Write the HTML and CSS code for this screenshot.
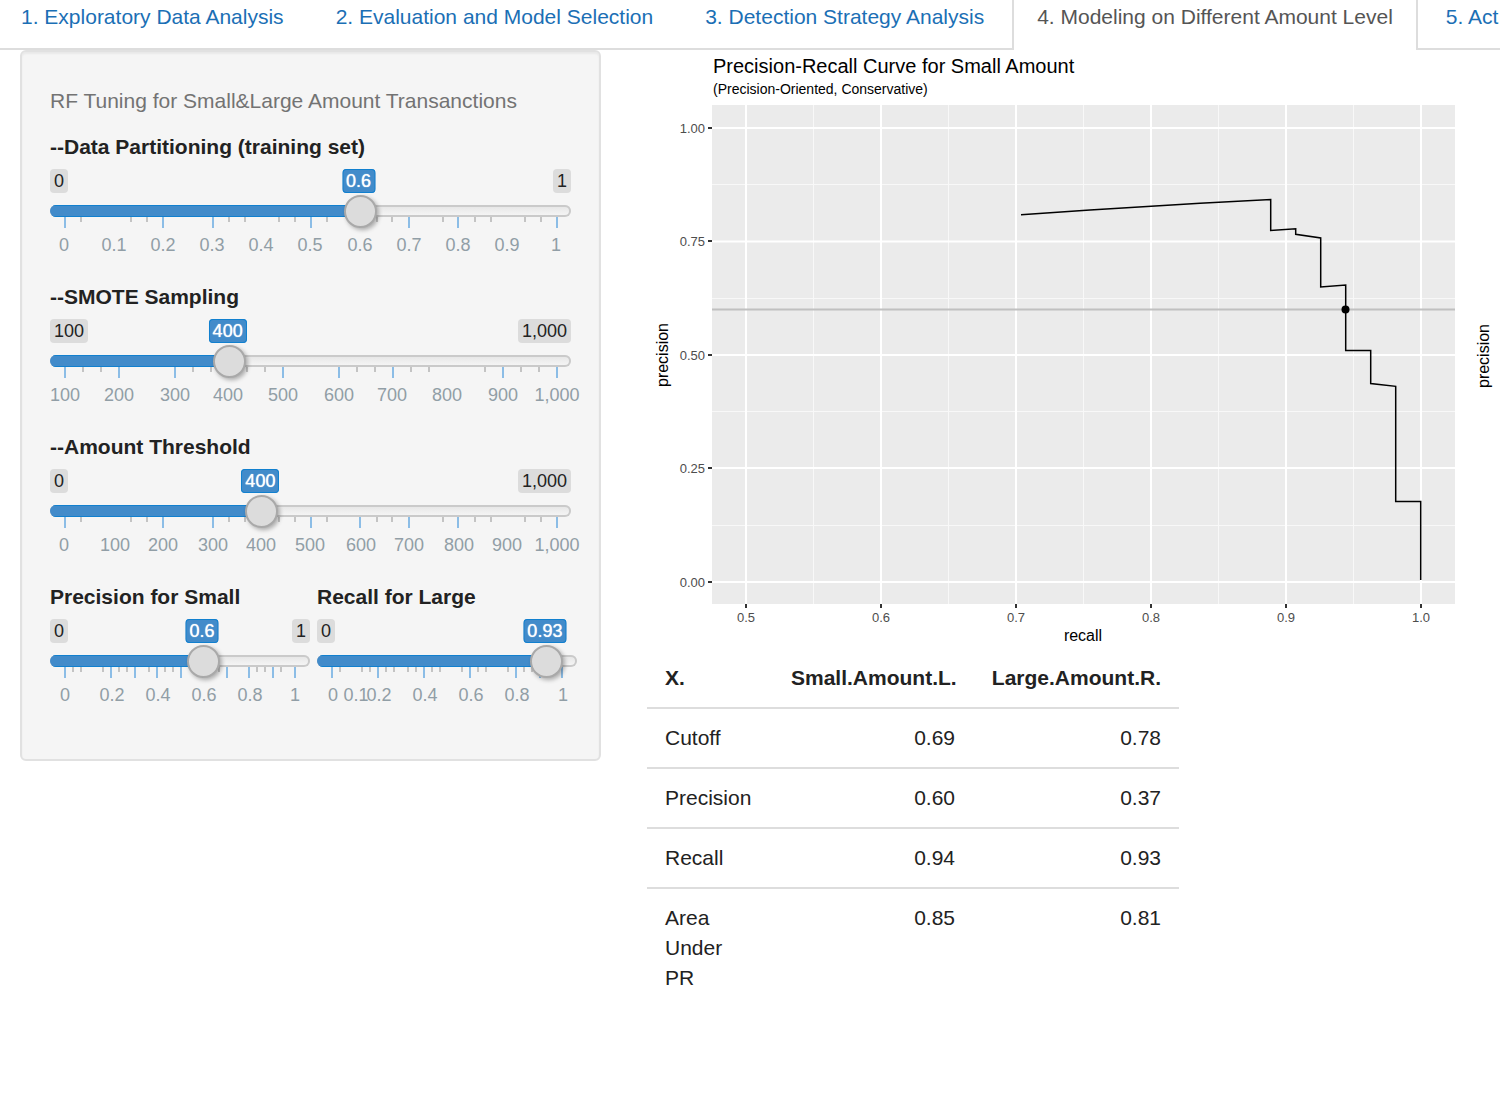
FILE: index.html
```html
<!DOCTYPE html>
<html lang="en">
<head>
<meta charset="utf-8">
<title>Modeling on Different Amount Level</title>
<link rel="stylesheet" href="styles.css">
</head>
<body>
<nav class="tabs">
  <a class="tab" href="#explore">1. Exploratory Data Analysis</a>
  <a class="tab" href="#evaluation">2. Evaluation and Model Selection</a>
  <a class="tab" href="#strategy">3. Detection Strategy Analysis</a>
  <a class="tab tab-active" href="#modeling" aria-current="page">4. Modeling on Different Amount Level</a>
  <a class="tab" href="#act">5. Act</a>
</nav>
<div class="layout">
  <form class="sidebar">
    <p class="help">RF Tuning for Small&amp;Large Amount Transanctions</p>

    <div class="slider" style="--p:0.6">
      <label for="partition">--Data Partitioning (training set)</label>
      <div class="chips"><span class="chip">0</span><span class="chip">1</span><output class="bubble" for="partition">0.6</output></div>
      <div class="control"><span class="track"><span class="fill"></span></span><input id="partition" type="range" min="0" max="1" step="0.1" value="0.6"></div>
      <svg class="scale" viewBox="0 0 521 40">
        <path class="big" d="M15 0v11M113 0v11M163 0v11M261 0v11M310 0v11M359 0v11M408 0v11M507 0v11"/>
        <path class="small" d="M31 0v5M81 0v5M97 0v5M179 0v5M195 0v5M229 0v5M245 0v5M277 0v5M327 0v5M342 0v5M393 0v5M425 0v5M441 0v5M475 0v5M491 0v5"/>
        <text x="14" y="34">0</text><text x="64" y="34">0.1</text><text x="113" y="34">0.2</text><text x="162" y="34">0.3</text><text x="211" y="34">0.4</text><text x="260" y="34">0.5</text><text x="310" y="34">0.6</text><text x="359" y="34">0.7</text><text x="408" y="34">0.8</text><text x="457" y="34">0.9</text><text x="506" y="34">1</text>
      </svg>
    </div>

    <div class="slider" style="--p:0.3333">
      <label for="smote">--SMOTE Sampling</label>
      <div class="chips"><span class="chip">100</span><span class="chip">1,000</span><output class="bubble" for="smote">400</output></div>
      <div class="control"><span class="track"><span class="fill"></span></span><input id="smote" type="range" min="100" max="1000" step="100" value="400"></div>
      <svg class="scale" viewBox="0 0 521 40">
        <path class="big" d="M15 0v11M69 0v11M125 0v11M179 0v11M233 0v11M289 0v11M343 0v11M453 0v11M507 0v11"/>
        <path class="small" d="M33 0v5M51 0v5M143 0v5M161 0v5M197 0v5M215 0v5M307 0v5M325 0v5M361 0v5M379 0v5M435 0v5M471 0v5M489 0v5"/>
        <text x="15" y="34">100</text><text x="69" y="34">200</text><text x="125" y="34">300</text><text x="178" y="34">400</text><text x="233" y="34">500</text><text x="289" y="34">600</text><text x="342" y="34">700</text><text x="397" y="34">800</text><text x="453" y="34">900</text><text x="507" y="34">1,000</text>
      </svg>
    </div>

    <div class="slider" style="--p:0.4">
      <label for="threshold">--Amount Threshold</label>
      <div class="chips"><span class="chip">0</span><span class="chip">1,000</span><output class="bubble" for="threshold">400</output></div>
      <div class="control"><span class="track"><span class="fill"></span></span><input id="threshold" type="range" min="0" max="1000" step="100" value="400"></div>
      <svg class="scale" viewBox="0 0 521 40">
        <path class="big" d="M15 0v11M113 0v11M163 0v11M261 0v11M310 0v11M359 0v11M408 0v11M507 0v11"/>
        <path class="small" d="M31 0v5M81 0v5M97 0v5M179 0v5M195 0v5M229 0v5M245 0v5M277 0v5M327 0v5M342 0v5M393 0v5M425 0v5M441 0v5M475 0v5M491 0v5"/>
        <text x="14" y="34">0</text><text x="65" y="34">100</text><text x="113" y="34">200</text><text x="163" y="34">300</text><text x="211" y="34">400</text><text x="260" y="34">500</text><text x="311" y="34">600</text><text x="359" y="34">700</text><text x="409" y="34">800</text><text x="457" y="34">900</text><text x="507" y="34">1,000</text>
      </svg>
    </div>

    <div class="pair">
      <div class="slider" style="--p:0.6">
        <label for="precision">Precision for Small</label>
        <div class="chips"><span class="chip">0</span><span class="chip">1</span><output class="bubble" for="precision">0.6</output></div>
        <div class="control"><span class="track"><span class="fill"></span></span><input id="precision" type="range" min="0" max="1" step="0.01" value="0.6"></div>
        <svg class="scale" viewBox="0 0 260 40">
          <path class="big" d="M15 0v11M61 0v11M85 0v11M107 0v11M131 0v11M153 0v11M177 0v11M199 0v11M223 0v11M245 0v11"/>
          <path class="small" d="M23 0v5M31 0v5M53 0v5M69 0v5M77 0v5M99 0v5M115 0v5M123 0v5M169 0v5M207 0v5M215 0v5M231 0v5"/>
          <text x="15" y="34">0</text><text x="62" y="34">0.2</text><text x="108" y="34">0.4</text><text x="154" y="34">0.6</text><text x="200" y="34">0.8</text><text x="245" y="34">1</text>
        </svg>
      </div>
      <div class="slider" style="--p:0.93">
        <label for="recall">Recall for Large</label>
        <div class="chips"><span class="chip">0</span><output class="bubble" for="recall">0.93</output></div>
        <div class="control"><span class="track"><span class="fill"></span></span><input id="recall" type="range" min="0" max="1" step="0.01" value="0.93"></div>
        <svg class="scale" viewBox="0 0 260 40">
          <path class="big" d="M15 0v11M61 0v11M107 0v11M153 0v11M199 0v11M223 0v11M245 0v11"/>
          <path class="small" d="M23 0v5M45 0v5M53 0v5M69 0v5M77 0v5M91 0v5M99 0v5M115 0v5M123 0v5M145 0v5M161 0v5M169 0v5M191 0v5M207 0v5M215 0v5"/>
          <text x="16" y="34">0</text><text x="39" y="34">0.1</text><text x="62" y="34">0.2</text><text x="108" y="34">0.4</text><text x="154" y="34">0.6</text><text x="200" y="34">0.8</text><text x="246" y="34">1</text>
        </svg>
      </div>
    </div>
  </form>

  <main class="results">
    <div class="plots">
      <svg class="plot" viewBox="647 50 815 599" role="img" aria-label="Precision-recall curve for small amounts">
        <text class="title" x="713" y="73">Precision-Recall Curve for Small Amount</text>
        <text class="subtitle" x="713" y="94">(Precision-Oriented, Conservative)</text>
        <rect class="panel" x="712" y="105" width="743" height="499"/>
        <path class="minor" d="M813.5 105v499M948.5 105v499M1083.5 105v499M1218.5 105v499M1353.5 105v499M712 184.5h743M712 298.5h743M712 411.5h743M712 525.5h743"/>
        <path class="major" d="M746 105v499M881 105v499M1016 105v499M1151 105v499M1286 105v499M1421 105v499M712 128h743M712 241.5h743M712 355h743M712 468h743M712 582h743"/>
        <path class="axis" d="M708 128h4M708 241h4M708 355h4M708 468h4M708 582h4M746 604v4M881 604v4M1016 604v4M1151 604v4M1286 604v4M1421 604v4"/>
        <path class="curve" d="M1021 214.7L1090 210L1200 203.3L1270.7 199.5V230.5L1295.7 228.7V234.3L1320.7 238V287L1345.7 285V350.5H1370.7V383.5L1395.7 386.3V501.5H1420.7V580"/>
        <path class="cutoff" d="M712 309.5h743"/>
        <circle cx="1345.5" cy="309.5" r="4"/>
        <g class="ylabels"><text x="705" y="133">1.00</text><text x="705" y="246">0.75</text><text x="705" y="360">0.50</text><text x="705" y="473">0.25</text><text x="705" y="587">0.00</text></g>
        <g class="xlabels"><text x="746" y="622">0.5</text><text x="881" y="622">0.6</text><text x="1016" y="622">0.7</text><text x="1151" y="622">0.8</text><text x="1286" y="622">0.9</text><text x="1421" y="622">1.0</text></g>
        <text class="name" x="1083" y="641">recall</text>
        <text class="name" transform="translate(668 355) rotate(-90)">precision</text>
      </svg>
      <svg class="plot" viewBox="0 0 38 599" role="img" aria-label="Precision-recall curve for large amounts">
        <text class="name" transform="translate(27 306) rotate(-90)">precision</text>
      </svg>
    </div>
    <table class="scores">
      <thead><tr><th scope="col">X.</th><th scope="col">Small.Amount.L.</th><th scope="col">Large.Amount.R.</th></tr></thead>
      <tbody>
        <tr><td>Cutoff</td><td>0.69</td><td>0.78</td></tr>
        <tr><td>Precision</td><td>0.60</td><td>0.37</td></tr>
        <tr><td>Recall</td><td>0.94</td><td>0.93</td></tr>
        <tr><td>Area Under PR</td><td>0.85</td><td>0.81</td></tr>
      </tbody>
    </table>
  </main>
</div>
</body>
</html>
```
FILE: styles.css
```css
* { box-sizing: border-box; }
body {
  margin: 0;
  background: #fff;
  color: #222;
  font: 21px/30px "Liberation Sans", Arial, sans-serif;
  overflow-x: hidden;
}

/* Tab strip */
.tabs { display: flex; overflow: hidden; gap: 4px; box-shadow: inset 0 -2px #ddd; }
.tab {
  flex: none;
  padding: 2px 24px 18px;
  color: #1b6fb5;
  text-decoration: none;
  white-space: nowrap;
}
.tab:first-child { padding-left: 21px; }
.tab-active {
  padding: 2px 23px 18px;
  border: solid #ddd;
  border-width: 0 2px;
  background: #fff;
  color: #555;
}

.layout {
  display: grid;
  grid-template-columns: 581fr 899fr;
  align-items: start;
  padding-left: 20px;
}

/* Sidebar with the tuning sliders */
.sidebar {
  padding: 34px 28px 42px;
  border: 2px solid #e1e1e1;
  border-radius: 6px;
  background: #f5f5f5;
  box-shadow: inset 0 2px 2px rgba(0, 0, 0, .05);
}
.help { margin: 0 0 16px; color: #737373; }
.slider { height: 135px; margin-bottom: 15px; }
.slider label { display: block; font-weight: bold; }
.chips {
  position: relative;
  display: flex;
  justify-content: space-between;
  margin: 7px 0 1px;
  font-size: 18px;
  line-height: 24px;
}
.chip { padding: 0 4px; border-radius: 4px; background: #dcdcdc; color: #222; }
.bubble {
  position: absolute;
  left: calc(14px + (100% - 30px) * var(--p));
  transform: translateX(-50%);
  padding: 0 4px;
  border-radius: 4px;
  background: #428bca;
  box-shadow: inset 0 0 0 1px #1180cf;
  color: #fff;
  text-shadow: 0 0 1px #fff;
}
.control { position: relative; z-index: 1; display: grid; align-items: center; }
.control > * { grid-area: 1 / 1; }
.track {
  height: 12px;
  border-radius: 6px;
  background: linear-gradient(#e4e4e4, #f8f8f8);
  box-shadow: inset 0 0 0 2px #cacaca;
  overflow: hidden;
}
.fill {
  display: block;
  width: calc(16px + (100% - 32px) * var(--p));
  height: 12px;
  border: solid #1180cf;
  border-width: 1px 0;
  background: #428bca;
}
.control input {
  appearance: none;
  width: calc(100% + 3px);
  height: 34px;
  margin: 0 -1px;
  background: transparent;
}
.control input::-webkit-slider-thumb {
  appearance: none;
  width: 33px;
  height: 33px;
  border: 2px solid #a9a9a9;
  border-radius: 50%;
  background: #dcdcdc;
  box-shadow: 2px 2px 4px rgba(0, 0, 0, .3);
}
.scale { display: block; width: 100%; margin-top: -11px; overflow: visible; }
.scale path { stroke-width: 2; }
.scale .big { stroke: #8cbde6; }
.scale .small { stroke: #c4c4c4; }
.scale text { fill: #919ea6; font-size: 18px; text-anchor: middle; }
.pair { display: grid; grid-template-columns: 1fr 1fr; gap: 7px; margin-right: -6px; }
.pair .slider { margin: 0; }

/* Plots and score table */
.results { padding-left: 46px; }
.plots { display: grid; grid-template-columns: 815fr 38fr; }
.plot { display: block; width: 100%; }
.title { font-size: 20px; }
.subtitle { font-size: 14px; }
.name { font-size: 16px; text-anchor: middle; }
.panel { fill: #ebebeb; }
.minor { stroke: #f8f8f8; }
.major { stroke: #fff; stroke-width: 2; }
.axis { stroke: #333; stroke-width: 2; }
.cutoff { stroke: #c0c0c0; stroke-width: 2; }
.curve { fill: none; stroke: #000; stroke-width: 1.5; }
.ylabels, .xlabels { fill: #4d4d4d; font-size: 13px; }
.ylabels { text-anchor: end; }
.xlabels { text-anchor: middle; }

.scores { width: 532px; max-width: 100%; border-collapse: collapse; table-layout: fixed; }
.scores th, .scores td { padding: 14px 18px; text-align: right; vertical-align: top; }
.scores td { border-top: 2px solid #ddd; }
.scores th:first-child, .scores td:first-child { width: 126px; text-align: left; }
.scores th:nth-child(2) { width: 200px; }
```
